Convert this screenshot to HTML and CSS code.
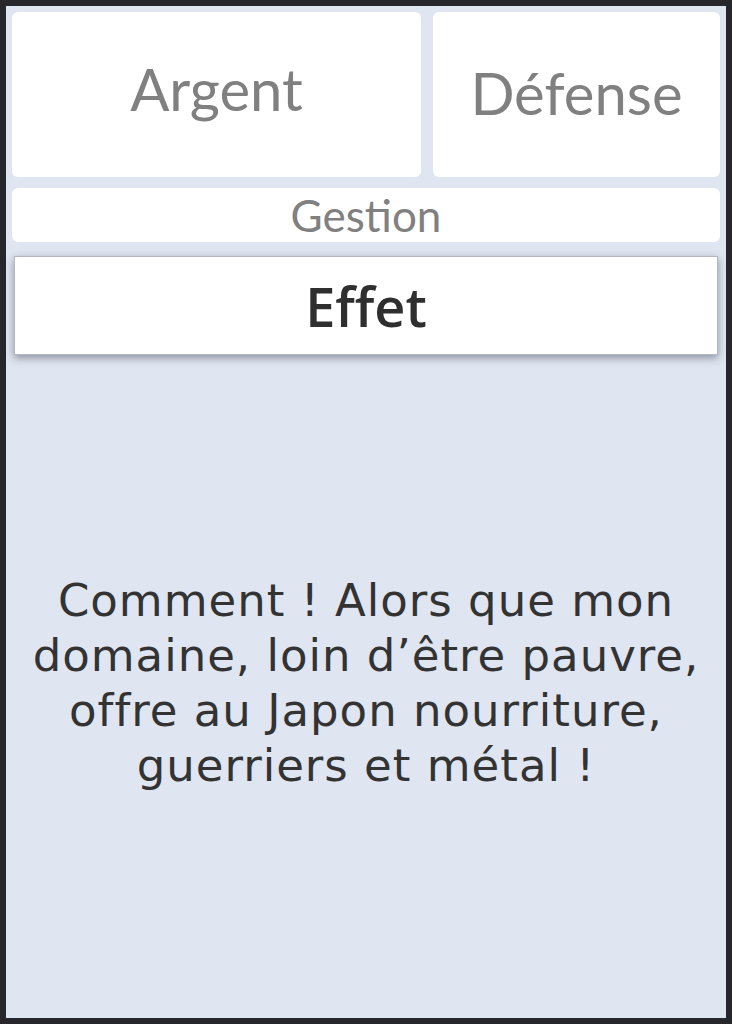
FILE: index.html
```html
<!DOCTYPE html>
<html lang="fr">
<head>
<meta charset="utf-8">
<title>Carte</title>
<link rel="stylesheet" href="styles.css">
</head>
<body>
<div class="screen">
  <div class="top-row">
    <div class="card card-argent"><span class="big-label label-argent">Argent</span></div>
    <div class="card"><span class="big-label">Défense</span></div>
  </div>
  <div class="bar-gestion">Gestion</div>
  <div class="bar-effet">Effet</div>
  <div class="effect-text">
    <p>Comment ! Alors que mon<br>domaine, loin d’être pauvre,<br>offre au Japon nourriture,<br>guerriers et métal !</p>
  </div>
</div>
</body>
</html>
```
FILE: styles.css
```css
html, body {
  margin: 0;
  padding: 0;
}
body {
  background: #26272c;
  padding: 6px;
  width: 732px;
  height: 1024px;
  box-sizing: border-box;
}
.screen {
  height: 1012px;
  background: #dfe5f1;
  padding: 6px;
  box-sizing: border-box;
  display: flex;
  flex-direction: column;
}
.top-row {
  display: grid;
  grid-template-columns: 409fr 287fr;
  column-gap: 12px;
  height: 165px;
}
.card {
  background: #ffffff;
  border-radius: 6px;
  display: flex;
  align-items: center;
  justify-content: center;
}
.big-label {
  font-family: Lato, "Liberation Sans", sans-serif;
  font-size: 58px;
  color: #808080;
  line-height: 1;
  margin-top: -4px;
}
.label-argent {
  margin-top: -12px;
}
.bar-gestion {
  margin-top: 11px;
  height: 54px;
  background: #ffffff;
  border-radius: 6px;
  font-family: Lato, "Liberation Sans", sans-serif;
  font-size: 44px;
  color: #808080;
  line-height: 54px;
  text-align: center;
}
.bar-effet {
  margin: 14px 2px 0;
  height: 99px;
  box-sizing: border-box;
  background: #ffffff;
  border: 1px solid #b4b7bf;
  box-shadow: 0 3px 8px rgba(40, 45, 60, 0.45);
  font-family: "Open Sans", sans-serif;
  font-weight: 600;
  font-size: 54px;
  color: #2f2f2f;
  display: flex;
  align-items: center;
  justify-content: center;
}
.effect-text {
  flex: 1;
  display: flex;
  align-items: center;
  justify-content: center;
}
.effect-text p {
  margin: 0 0 2px;
  font-family: "DejaVu Sans", sans-serif;
  font-size: 45px;
  letter-spacing: 1px;
  line-height: 55px;
  color: #333333;
  text-align: center;
  white-space: nowrap;
}
```
